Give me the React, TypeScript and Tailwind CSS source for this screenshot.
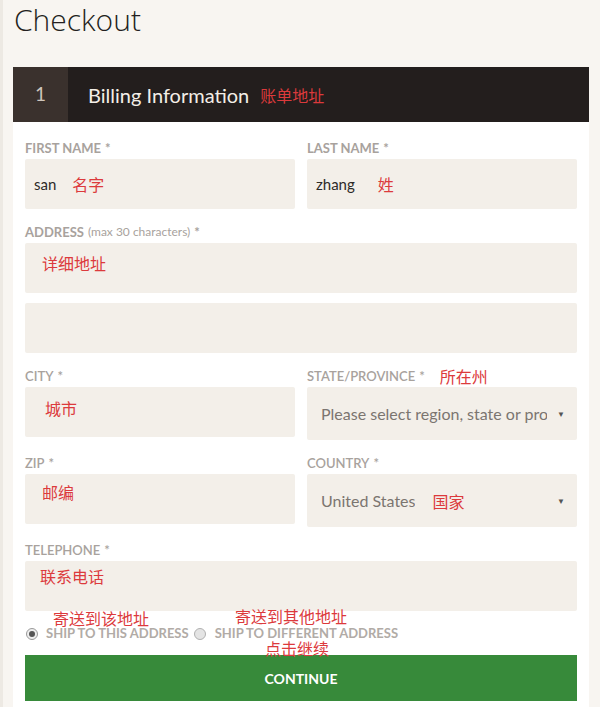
import React from "react";

const red = "text-[#dc3a3c] font-['Noto_Sans_CJK_SC',sans-serif] font-normal normal-case text-[16px] leading-none";

function Label({
  text,
  extra,
  bold = true,
  children,
}: {
  text: string;
  extra?: string;
  bold?: boolean;
  children?: React.ReactNode;
}) {
  return (
    <div
      className={`h-4 mb-1 pt-[2px] flex items-center text-[13px] leading-4 text-[#a8a29d] uppercase ${
        bold ? "font-bold" : "font-semibold"
      }`}
    >
      <span>{text}</span>
      {extra && <span className="ml-1 normal-case font-normal text-[12px]">{extra}</span>}
      <span className="ml-1">*</span>
      {children}
    </div>
  );
}

function Field({ children, tall }: { children?: React.ReactNode; tall?: boolean }) {
  return (
    <div
      className={`relative ${
        tall ? "h-[53px]" : "h-[50px]"
      } rounded-[2px] bg-[#f3efe9] flex items-center px-[9px] text-[15px] text-[#2d2a28]`}
    >
      {children}
    </div>
  );
}

function Select({ value, note }: { value: string; note?: string }) {
  return (
    <Field tall>
      <div className="flex-1 min-w-0 flex items-center pl-[5px] text-[16px] text-[#7b7570] overflow-hidden whitespace-nowrap">
        <span className="overflow-hidden">{value}</span>
        {note && <span className={`${red} ml-[17px]`}>{note}</span>}
      </div>
      <span className="ml-[10px] mr-[3px] text-[8px] text-[#555]">▼</span>
    </Field>
  );
}

export default function App() {
  return (
    <div className="relative min-h-[707px] bg-[#f8f5f1] border-l-[3px] border-[#ede9e3] pl-[10px] pr-[11px] font-['Lato',sans-serif]">
      <h1 className="h-[67px] pt-[1px] pl-[1px] font-['Open_Sans',sans-serif] font-light text-[30px] leading-[38px] text-[#231f20]">
        Checkout
      </h1>

      <div className="flex h-[55px] bg-[#231e1d]">
        <div className="w-[55px] flex items-center justify-center bg-[#3a312d] text-[19px] text-[#cfc6bc]">
          1
        </div>
        <div className="flex items-center pl-5 text-[20px] text-[#f3eee7]">
          Billing Information
          <span className={`${red} ml-[11px]`}>账单地址</span>
        </div>
      </div>

      <div className="bg-white px-3 pt-[17px] pb-[6px]">
        <div className="grid grid-cols-2 gap-x-3 gap-y-[14px]">
          <div>
            <Label text="First Name" />
            <Field>
              <span>san</span>
              <span className={`${red} ml-4`}>名字</span>
            </Field>
          </div>
          <div>
            <Label text="Last Name" />
            <Field>
              <span>zhang</span>
              <span className={`${red} ml-[23px]`}>姓</span>
            </Field>
          </div>

          <div className="col-span-2">
            <Label text="Address" extra="(max 30 characters)" />
            <Field>
              <span className={`${red} absolute left-[17px] top-[12px]`}>详细地址</span>
            </Field>
            <div className="mt-[10px]">
              <Field />
            </div>
          </div>

          <div>
            <Label text="City" bold={false} />
            <Field>
              <span className={`${red} absolute left-[20px] top-[13px]`}>城市</span>
            </Field>
          </div>
          <div>
            <Label text="State/Province" bold={false}>
              <span className={`${red} ml-[15px]`}>所在州</span>
            </Label>
            <Select value="Please select region, state or province" />
          </div>

          <div>
            <Label text="Zip" bold={false} />
            <Field>
              <span className={`${red} absolute left-[17px] top-[10px]`}>邮编</span>
            </Field>
          </div>
          <div>
            <Label text="Country" bold={false} />
            <Select value="United States" note="国家" />
          </div>

          <div className="col-span-2">
            <Label text="Telephone" bold={false} />
            <Field>
              <span className={`${red} absolute left-[15px] top-[7px]`}>联系电话</span>
            </Field>
          </div>
        </div>

        <div className="h-[44px] pt-[1px] flex items-center text-[13px] font-bold uppercase text-[#b1aba6]">
          <span className="w-[12px] h-[12px] ml-[1px] rounded-full border border-[#9a9a9a] bg-[#eee] flex items-center justify-center">
            <span className="w-[6px] h-[6px] rounded-full bg-[#555]" />
          </span>
          <span className="ml-[8px]">Ship to this address</span>
          <span className="ml-[5px] w-[12px] h-[12px] rounded-full border border-[#b0b0b0] bg-[#e4e4e4]" />
          <span className="ml-[9px]">Ship to different address</span>
        </div>

        <button className="w-full h-[46px] bg-[#378a3a] text-white text-[14px] font-bold uppercase">
          Continue
        </button>
      </div>

      <span className={`${red} absolute left-[50px] top-[610px]`}>寄送到该地址</span>
      <span className={`${red} absolute left-[232px] top-[608px]`}>寄送到其他地址</span>
      <span className={`${red} absolute left-[262px] top-[640px]`}>点击继续</span>
    </div>
  );
}
